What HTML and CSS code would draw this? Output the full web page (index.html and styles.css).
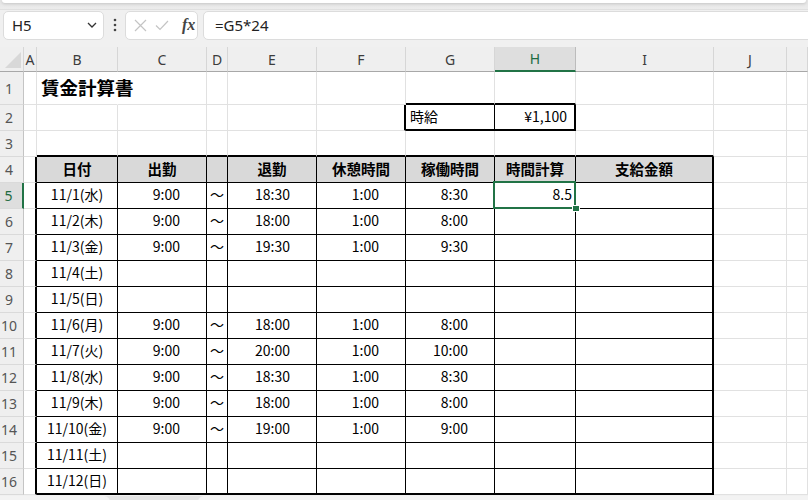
FILE: index.html
```html
<!DOCTYPE html>
<html lang="ja">
<head>
  <meta charset="UTF-8" />
  <meta name="viewport" content="width=device-width, initial-scale=1.0" />
  <title>賃金計算書 - Excel</title>
  <link rel="stylesheet" href="styles.css">
</head>
<body>
  <div class="ribbon-edge"><div class="ribbon"></div></div>

  <!-- Barre de formule -->
  <div class="formula-bar">
    <div class="name-box">
      <span>H5</span>
      <svg width="10" height="6" viewBox="0 0 10 6"><polyline points="1,1 5,5 9,1" fill="none" stroke="#333" stroke-width="1.3"/></svg>
    </div>
    <svg class="grip" width="4" height="14" viewBox="0 0 4 14"><circle cx="2" cy="2" r="1.3" fill="#444"/><circle cx="2" cy="7" r="1.3" fill="#444"/><circle cx="2" cy="12" r="1.3" fill="#444"/></svg>
    <div class="fx-box">
      <svg width="13" height="13" viewBox="0 0 13 13"><path d="M1 1 L12 12 M12 1 L1 12" stroke="#c4c4c4" stroke-width="1.2" fill="none"/></svg>
      <svg width="14" height="11" viewBox="0 0 14 11"><polyline points="1,5.5 5,9.5 13,1" fill="none" stroke="#c4c4c4" stroke-width="1.2"/></svg>
      <span class="fx">fx</span>
    </div>
    <div class="formula-input">=G5*24</div>
  </div>

  <!-- Feuille -->
  <table class="sheet">
    <colgroup>
      <col class="w-rh"><col class="w-a"><col class="w-b"><col class="w-c"><col class="w-d"><col class="w-e">
      <col class="w-f"><col class="w-g"><col class="w-h"><col class="w-i"><col class="w-j"><col class="w-k">
    </colgroup>
    <tr class="col-head">
      <th class="corner"><svg width="16" height="16" viewBox="0 0 16 16"><polygon points="16,0 16,16 0,16" fill="#d8d8d8"/></svg></th>
      <th>A</th><th>B</th><th>C</th><th>D</th><th>E</th><th>F</th><th>G</th><th class="active">H</th><th>I</th><th>J</th><th></th>
    </tr>
    <tr class="row-title">
      <th class="rh">1</th><td></td><td class="title no-r">賃金計算書</td><td></td><td></td><td></td><td></td>
      <td class="thick-b"></td><td class="thick-b"></td><td></td><td></td><td></td>
    </tr>
    <tr>
      <th class="rh">2</th><td></td><td></td><td></td><td></td><td></td><td class="thick-r"></td>
      <td class="line thick-b lft">時給</td><td class="thick-r thick-b val yen">¥1,100</td><td></td><td></td><td></td>
    </tr>
    <tr>
      <th class="rh">3</th><td></td><td class="thick-b"></td><td class="thick-b"></td><td class="thick-b"></td><td class="thick-b"></td>
      <td class="thick-b"></td><td class="thick-b"></td><td class="thick-b"></td><td class="thick-b"></td><td></td><td></td>
    </tr>
    <tr class="hd">
      <th class="rh">4</th><td class="thick-r"></td>
      <td class="line">日付</td><td class="line">出勤</td><td class="line"></td><td class="line">退勤</td>
      <td class="line">休憩時間</td><td class="line">稼働時間</td><td class="line">時間計算</td><td class="line thick-r">支給金額</td><td></td><td></td>
    </tr>
    <tr>
      <th class="rh active">5</th><td class="thick-r"></td>
      <td class="line ctr">11/1(水)</td><td class="line num">9:00</td><td class="line ctr">～</td><td class="line num">18:30</td>
      <td class="line num">1:00</td><td class="line num">8:30</td>
      <td class="line val cur">8.5<span class="sel"><span class="handle"></span></span></td>
      <td class="line thick-r"></td><td></td><td></td>
    </tr>
    <tr>
      <th class="rh">6</th><td class="thick-r"></td>
      <td class="line ctr">11/2(木)</td><td class="line num">9:00</td><td class="line ctr">～</td><td class="line num">18:00</td>
      <td class="line num">1:00</td><td class="line num">8:00</td><td class="line"></td><td class="line thick-r"></td><td></td><td></td>
    </tr>
    <tr>
      <th class="rh">7</th><td class="thick-r"></td>
      <td class="line ctr">11/3(金)</td><td class="line num">9:00</td><td class="line ctr">～</td><td class="line num">19:30</td>
      <td class="line num">1:00</td><td class="line num">9:30</td><td class="line"></td><td class="line thick-r"></td><td></td><td></td>
    </tr>
    <tr>
      <th class="rh">8</th><td class="thick-r"></td>
      <td class="line ctr">11/4(土)</td><td class="line"></td><td class="line"></td><td class="line"></td>
      <td class="line"></td><td class="line"></td><td class="line"></td><td class="line thick-r"></td><td></td><td></td>
    </tr>
    <tr>
      <th class="rh">9</th><td class="thick-r"></td>
      <td class="line ctr">11/5(日)</td><td class="line"></td><td class="line"></td><td class="line"></td>
      <td class="line"></td><td class="line"></td><td class="line"></td><td class="line thick-r"></td><td></td><td></td>
    </tr>
    <tr>
      <th class="rh">10</th><td class="thick-r"></td>
      <td class="line ctr">11/6(月)</td><td class="line num">9:00</td><td class="line ctr">～</td><td class="line num">18:00</td>
      <td class="line num">1:00</td><td class="line num">8:00</td><td class="line"></td><td class="line thick-r"></td><td></td><td></td>
    </tr>
    <tr>
      <th class="rh">11</th><td class="thick-r"></td>
      <td class="line ctr">11/7(火)</td><td class="line num">9:00</td><td class="line ctr">～</td><td class="line num">20:00</td>
      <td class="line num">1:00</td><td class="line num">10:00</td><td class="line"></td><td class="line thick-r"></td><td></td><td></td>
    </tr>
    <tr>
      <th class="rh">12</th><td class="thick-r"></td>
      <td class="line ctr">11/8(水)</td><td class="line num">9:00</td><td class="line ctr">～</td><td class="line num">18:30</td>
      <td class="line num">1:00</td><td class="line num">8:30</td><td class="line"></td><td class="line thick-r"></td><td></td><td></td>
    </tr>
    <tr>
      <th class="rh">13</th><td class="thick-r"></td>
      <td class="line ctr">11/9(木)</td><td class="line num">9:00</td><td class="line ctr">～</td><td class="line num">18:00</td>
      <td class="line num">1:00</td><td class="line num">8:00</td><td class="line"></td><td class="line thick-r"></td><td></td><td></td>
    </tr>
    <tr>
      <th class="rh">14</th><td class="thick-r"></td>
      <td class="line ctr">11/10(金)</td><td class="line num">9:00</td><td class="line ctr">～</td><td class="line num">19:00</td>
      <td class="line num">1:00</td><td class="line num">9:00</td><td class="line"></td><td class="line thick-r"></td><td></td><td></td>
    </tr>
    <tr>
      <th class="rh">15</th><td class="thick-r"></td>
      <td class="line ctr">11/11(土)</td><td class="line"></td><td class="line"></td><td class="line"></td>
      <td class="line"></td><td class="line"></td><td class="line"></td><td class="line thick-r"></td><td></td><td></td>
    </tr>
    <tr>
      <th class="rh">16</th><td class="thick-r"></td>
      <td class="line thick-b ctr">11/12(日)</td><td class="line thick-b"></td><td class="line thick-b"></td><td class="line thick-b"></td>
      <td class="line thick-b"></td><td class="line thick-b"></td><td class="line thick-b"></td><td class="line thick-r thick-b"></td><td></td><td></td>
    </tr>
  </table>

  <div class="bottom-bar">
    <div class="tab-left"></div>
    <div class="tab-right"></div>
  </div>
</body>
</html>
```

FILE: styles.css
```css
* {
  box-sizing: border-box;
  margin: 0;
  padding: 0;
}

html, body {
  width: 808px;
  height: 500px;
  overflow: hidden;
}

body {
  background: #f0f0f0;
  font-family: "Noto Sans CJK JP", "Noto Sans", sans-serif;
  color: #000;
}

/* bas du ruban */
.ribbon-edge {
  height: 10px;
  background: linear-gradient(#e4e4e4, #ececec);
  border-bottom: 1px solid #e0e0e0;
}

.ribbon {
  height: 3px;
  margin: 0 2px;
  background: #fff;
  border-radius: 0 0 6px 6px;
  box-shadow: 0 1px 3px rgba(0, 0, 0, 0.15);
}

/* barre de formule */
.formula-bar {
  display: flex;
  align-items: center;
  height: 30px;
  padding-left: 3px;
  margin-bottom: 7px;
}

.name-box, .fx-box, .formula-input {
  height: 29px;
  background: #fff;
  border: 1px solid #dcdcdc;
  border-radius: 5px;
  display: flex;
  align-items: center;
}

.name-box {
  width: 101px;
  justify-content: space-between;
  padding: 0 6px 0 8px;
  font-family: "Noto Sans", sans-serif;
  font-size: 15px;
  color: #222;
}

.grip {
  margin-left: 9px;
}

.fx-box {
  width: 73px;
  margin-left: 8px;
  padding-left: 8px;
  gap: 8px;
}

.fx {
  font-family: "Liberation Serif", serif;
  font-style: italic;
  font-weight: bold;
  font-size: 16px;
  color: #444;
  margin-left: 5px;
}

.formula-input {
  flex: 1;
  margin-left: 5px;
  margin-right: -10px;
  padding-left: 11px;
  font-family: "Noto Sans", sans-serif;
  font-size: 15px;
  color: #222;
}

/* grille */
.sheet {
  table-layout: fixed;
  width: 808px;
  border-collapse: separate;
  border-spacing: 0;
  background: #fff;
}

.w-rh { width: 24px; }
.w-a { width: 13px; }
.w-b { width: 81px; }
.w-c { width: 89px; }
.w-d { width: 21px; }
.w-e { width: 89px; }
.w-f { width: 89px; }
.w-g { width: 89px; }
.w-h { width: 81px; }
.w-i { width: 138px; }
.w-j { width: 73px; }
.w-k { width: 21px; }

.sheet tr {
  height: 26px;
}

.sheet td {
  border-right: 1px solid #e1e1e1;
  border-bottom: 1px solid #e1e1e1;
  font-size: 14px;
  padding: 0 3px 3px;
  vertical-align: middle;
  white-space: nowrap;
}

.col-head {
  height: 25px !important;
}

.col-head th {
  background: #efefef;
  border-right: 1px solid #d6d6d6;
  border-bottom: 1px solid #a8a8a8;
  font-family: "Noto Sans", sans-serif;
  font-weight: normal;
  font-size: 14px;
  color: #3c3c3c;
}

.col-head th.active {
  background: #dedede;
  color: #1d6b41;
  border-right-color: #bcbcbc;
  border-bottom: 2px solid #217346;
}

.corner {
  text-align: right;
  vertical-align: bottom;
  padding: 0 2px 3px 0;
}

.corner svg {
  display: block;
  margin-left: auto;
}

.rh {
  background: #efefef;
  border-right: 1px solid #c4c4c4;
  border-bottom: 1px solid #dadada;
  font-family: "Noto Sans", sans-serif;
  font-weight: normal;
  font-size: 14px;
  color: #555;
  text-align: center;
  padding-right: 5px;
}

.rh.active {
  background: #dedede;
  color: #1d6b41;
  border-right: 2px solid #217346;
}

.row-title {
  height: 33px !important;
}

.sheet td.title {
  font-size: 18.5px;
  font-weight: bold;
  padding: 0 0 2px 4px;
  overflow: visible;
}

.no-r {
  border-right-color: #fff !important;
}

/* bordures du tableau */
.line {
  border-right-color: #000 !important;
  border-bottom-color: #000 !important;
}

.sheet td.thick-r {
  border-right: 2px solid #000;
}

.sheet td.thick-b {
  border-bottom: 2px solid #000;
}

.hd td.line {
  background: #d9d9d9;
  font-weight: bold;
  font-size: 14.5px;
  text-align: center;
}

.ctr { text-align: center; }

.lft {
  padding-left: 4px !important;
}

.num {
  text-align: right;
  padding-right: 26px !important;
}

.val {
  text-align: right;
}

.yen {
  padding-right: 7px !important;
}

/* cellule active */
.cur {
  position: relative;
}

.sel {
  position: absolute;
  left: -2px;
  top: -2px;
  right: -1px;
  bottom: -1px;
  border: 2px solid #217346;
}

.handle {
  position: absolute;
  right: -5px;
  bottom: -4px;
  width: 6px;
  height: 5px;
  background: #217346;
  outline: 1px solid #fff;
}

/* barre du bas */
.bottom-bar {
  display: flex;
  height: 10px;
  margin-top: 1px;
  background: #e4e4e4;
}

.tab-left {
  width: 110px;
  background: #f3f3f3;
  border-radius: 0 6px 0 0;
}

.tab-right {
  flex: 1;
  margin-left: 88px;
  background: #f3f3f3;
  border-radius: 6px 0 0 0;
}
```
